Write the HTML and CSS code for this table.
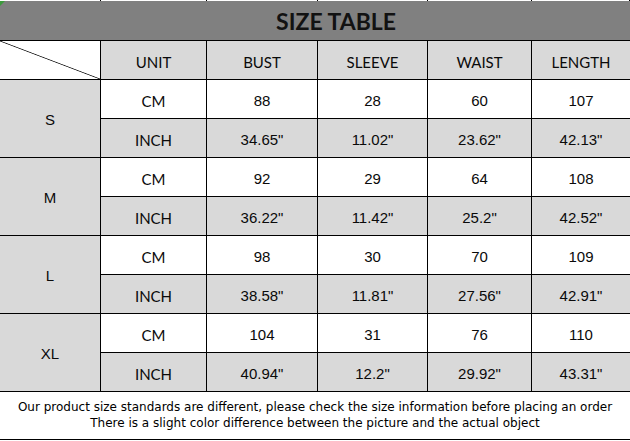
FILE: index.html
```html
<!DOCTYPE html>
<html>
<head>
<meta charset="utf-8">
<link rel="stylesheet" href="styles.css">
</head>
<body>
<div class="sheet">
  <div class="strip"></div><div class="strip"></div><div class="strip"></div><div class="strip"></div><div class="strip"></div><div class="strip end"></div>

  <div class="title">SIZE TABLE</div>

  <div class="corner"></div>
  <div class="cell head">UNIT</div>
  <div class="cell head">BUST</div>
  <div class="cell head">SLEEVE</div>
  <div class="cell head">WAIST</div>
  <div class="cell head end">LENGTH</div>

  <div class="size">S</div>
  <div class="cell unit">CM</div>
  <div class="cell num">88</div>
  <div class="cell num">28</div>
  <div class="cell num">60</div>
  <div class="cell num end">107</div>
  <div class="cell unit gray">INCH</div>
  <div class="cell num gray">34.65"</div>
  <div class="cell num gray">11.02"</div>
  <div class="cell num gray">23.62"</div>
  <div class="cell num gray end">42.13"</div>

  <div class="size">M</div>
  <div class="cell unit">CM</div>
  <div class="cell num">92</div>
  <div class="cell num">29</div>
  <div class="cell num">64</div>
  <div class="cell num end">108</div>
  <div class="cell unit gray">INCH</div>
  <div class="cell num gray">36.22"</div>
  <div class="cell num gray">11.42"</div>
  <div class="cell num gray">25.2"</div>
  <div class="cell num gray end">42.52"</div>

  <div class="size">L</div>
  <div class="cell unit">CM</div>
  <div class="cell num">98</div>
  <div class="cell num">30</div>
  <div class="cell num">70</div>
  <div class="cell num end">109</div>
  <div class="cell unit gray">INCH</div>
  <div class="cell num gray">38.58"</div>
  <div class="cell num gray">11.81"</div>
  <div class="cell num gray">27.56"</div>
  <div class="cell num gray end">42.91"</div>

  <div class="size">XL</div>
  <div class="cell unit">CM</div>
  <div class="cell num">104</div>
  <div class="cell num">31</div>
  <div class="cell num">76</div>
  <div class="cell num end">110</div>
  <div class="cell unit gray">INCH</div>
  <div class="cell num gray">40.94"</div>
  <div class="cell num gray">12.2"</div>
  <div class="cell num gray">29.92"</div>
  <div class="cell num gray end">43.31"</div>

  <div class="footer">
    <p>Our product size standards are different, please check the size information before placing an order</p>
    <p>There is a slight color difference between the picture and the actual object</p>
  </div>
</div>
</body>
</html>
```

FILE: styles.css
```css
* { box-sizing: border-box; }
html, body { margin: 0; padding: 0; background: #fff; }
body { width: 630px; height: 441px; overflow: hidden; }

.sheet {
  display: grid;
  grid-template-columns: 101px 106px 111px 110px 104px 98px;
  grid-template-rows: 1px 40px repeat(9, 39px) 48px;
  width: 630px;
  color: #0a0a0a;
}

.strip { border-right: 1px solid #000; background: #fff; }

.title {
  grid-column: 1 / 7;
  position: relative;
  background: #808080;
  border-bottom: 1px solid #000;
  display: flex;
  align-items: center;
  justify-content: center;
  padding-left: 42px;
  padding-top: 1px;
  font-family: Lato, "Liberation Sans", sans-serif;
  font-weight: 700;
  font-size: 23px;
  color: #121212;
}
.title::before {
  content: "";
  position: absolute;
  left: 0;
  top: 0;
  width: 0;
  height: 0;
  border-top: 5px solid #3c9a3c;
  border-right: 5px solid transparent;
}

.corner {
  border-right: 1px solid #000;
  border-bottom: 1px solid #000;
  background: linear-gradient(to top right, #fff calc(50% - 0.8px), #222 50%, #fff calc(50% + 0.8px));
}

.cell {
  display: flex;
  align-items: center;
  justify-content: center;
  border-right: 1px solid #000;
  border-bottom: 1px solid #000;
  background: #fff;
  padding-top: 3px;
}
.cell.end { border-right: none; }
.head, .gray { background: #d9d9d9; }

.head, .unit {
  font-family: Lato, "Liberation Sans", sans-serif;
  font-size: 15px;
}
.num {
  font-family: "Liberation Sans", Arial, sans-serif;
  font-size: 15px;
}

.size {
  grid-row: span 2;
  display: flex;
  align-items: center;
  justify-content: center;
  background: #d9d9d9;
  border-right: 1px solid #000;
  border-bottom: 1px solid #000;
  font-family: "Liberation Sans", Arial, sans-serif;
  font-size: 15px;
  padding-top: 1px;
}

.footer {
  grid-column: 1 / 7;
  border-bottom: 1px solid #000;
  display: flex;
  flex-direction: column;
  align-items: center;
  justify-content: center;
  font-family: "DejaVu Sans", Verdana, sans-serif;
  font-size: 12px;
  line-height: 16px;
  color: #000;
  padding-bottom: 2px;
}
.footer p { margin: 0; white-space: nowrap; }
```
